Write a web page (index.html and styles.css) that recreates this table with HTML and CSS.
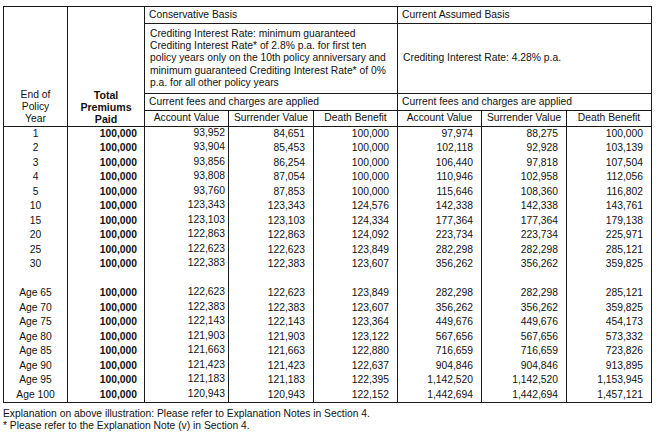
FILE: index.html
```html
<!DOCTYPE html>
<html lang="en">

<head>
    <meta charset="UTF-8">
    <title>Benefit Illustration</title>
    <link rel="stylesheet" href="styles.css">
</head>

<body>
    <table class="illustration">
        <colgroup>
            <col class="c-year">
            <col class="c-prem">
            <col class="c-val">
            <col class="c-val2">
            <col class="c-val">
            <col class="c-val">
            <col class="c-val2">
            <col class="c-val2">
        </colgroup>
        <thead>
            <tr class="h-basis">
                <th rowspan="4" class="h-year">End of<br>Policy<br>Year</th>
                <th rowspan="4" class="h-prem">Total<br>Premiums<br>Paid</th>
                <th colspan="3" class="h-left">Conservative Basis</th>
                <th colspan="3" class="h-left">Current Assumed Basis</th>
            </tr>
            <tr class="h-rate">
                <th colspan="3" class="h-text">Crediting Interest Rate: minimum guaranteed<br>Crediting Interest Rate* of 2.8% p.a. for first ten<br>policy years only on the 10th policy anniversary and<br>minimum guaranteed Crediting Interest Rate* of 0%<br>p.a. for all other policy years</th>
                <th colspan="3" class="h-text">Crediting Interest Rate: 4.28% p.a.</th>
            </tr>
            <tr class="h-fees">
                <th colspan="3" class="h-left">Current fees and charges are applied</th>
                <th colspan="3" class="h-left">Current fees and charges are applied</th>
            </tr>
            <tr class="h-cols">
                <th>Account Value</th>
                <th>Surrender Value</th>
                <th>Death Benefit</th>
                <th>Account Value</th>
                <th>Surrender Value</th>
                <th>Death Benefit</th>
            </tr>
        </thead>
        <tbody id="rows"></tbody>
    </table>

    <p class="note first">Explanation on above illustration: Please refer to Explanation Notes in Section 4.</p>
    <p class="note">* Please refer to the Explanation Note (v) in Section 4.</p>

    <script>
        // year, conservative (account, surrender, death), current (account, surrender, death)
        const data = [
            ['1', '93,952', '84,651', '100,000', '97,974', '88,275', '100,000'],
            ['2', '93,904', '85,453', '100,000', '102,118', '92,928', '103,139'],
            ['3', '93,856', '86,254', '100,000', '106,440', '97,818', '107,504'],
            ['4', '93,808', '87,054', '100,000', '110,946', '102,958', '112,056'],
            ['5', '93,760', '87,853', '100,000', '115,646', '108,360', '116,802'],
            ['10', '123,343', '123,343', '124,576', '142,338', '142,338', '143,761'],
            ['15', '123,103', '123,103', '124,334', '177,364', '177,364', '179,138'],
            ['20', '122,863', '122,863', '124,092', '223,734', '223,734', '225,971'],
            ['25', '122,623', '122,623', '123,849', '282,298', '282,298', '285,121'],
            ['30', '122,383', '122,383', '123,607', '356,262', '356,262', '359,825'],
            null,
            ['Age 65', '122,623', '122,623', '123,849', '282,298', '282,298', '285,121'],
            ['Age 70', '122,383', '122,383', '123,607', '356,262', '356,262', '359,825'],
            ['Age 75', '122,143', '122,143', '123,364', '449,676', '449,676', '454,173'],
            ['Age 80', '121,903', '121,903', '123,122', '567,656', '567,656', '573,332'],
            ['Age 85', '121,663', '121,663', '122,880', '716,659', '716,659', '723,826'],
            ['Age 90', '121,423', '121,423', '122,637', '904,846', '904,846', '913,895'],
            ['Age 95', '121,183', '121,183', '122,395', '1,142,520', '1,142,520', '1,153,945'],
            ['Age 100', '120,943', '120,943', '122,152', '1,442,694', '1,442,694', '1,457,121']
        ];

        const body = document.getElementById('rows');
        data.forEach(row => {
            const tr = document.createElement('tr');
            const cells = row ? [row[0], '100,000'].concat(row.slice(1)) : ['', '', '', '', '', '', '', ''];
            cells.forEach((text, i) => {
                const td = document.createElement('td');
                td.textContent = text;
                if (i === 0) td.className = 'year';
                else if (i === 1) td.className = 'prem';
                else if (i === 2) td.className = 'num acc';
                else td.className = 'num';
                tr.appendChild(td);
            });
            body.appendChild(tr);
        });
    </script>
</body>

</html>
```

FILE: styles.css
```css
body {
    margin: 6px 0 0 3px;
    background-color: #ffffff;
    color: #111111;
    font-family: "Liberation Sans", Arial, sans-serif;
    font-size: 10.3px;
}

.illustration {
    border-collapse: collapse;
    table-layout: fixed;
    width: 649px;
    border: 1px solid #1a1a1a;
}

.c-year { width: 64px; }
.c-prem { width: 77px; }
.c-val { width: 84px; }
.c-val2 { width: 85px; }

.illustration th {
    font-weight: normal;
    border: 1px solid #1a1a1a;
    padding: 0 4px;
    line-height: 12.3px;
}

.illustration th.h-year {
    vertical-align: bottom;
    text-align: center;
    line-height: 12px;
    padding-bottom: 1px;
}

.illustration th.h-prem {
    vertical-align: bottom;
    text-align: center;
    font-weight: bold;
    font-size: 10.6px;
    line-height: 12px;
    padding-bottom: 1px;
}

.illustration th.h-left {
    text-align: left;
}

.illustration th.h-text {
    text-align: left;
    padding-left: 5px;
}

.h-basis { height: 17px; }
.h-rate { height: 70px; }
.h-fees { height: 17px; }
.h-cols { height: 16px; }

.h-cols th {
    text-align: center;
    padding: 0;
}

.illustration tbody tr {
    height: 14.5px;
}

.illustration td {
    padding: 0;
    border-left: 1px solid #1a1a1a;
    border-right: 1px solid #1a1a1a;
    line-height: 12px;
    white-space: nowrap;
}

.year {
    text-align: center;
}

.prem {
    text-align: right;
    font-weight: bold;
    padding-right: 7px !important;
}

.num {
    text-align: right;
    padding-right: 8px !important;
}

.num.acc {
    padding-right: 3px !important;
    padding-bottom: 2px !important;
}

.note {
    margin: 0;
    line-height: 12px;
}

.note.first {
    margin-top: 5px;
}
```
